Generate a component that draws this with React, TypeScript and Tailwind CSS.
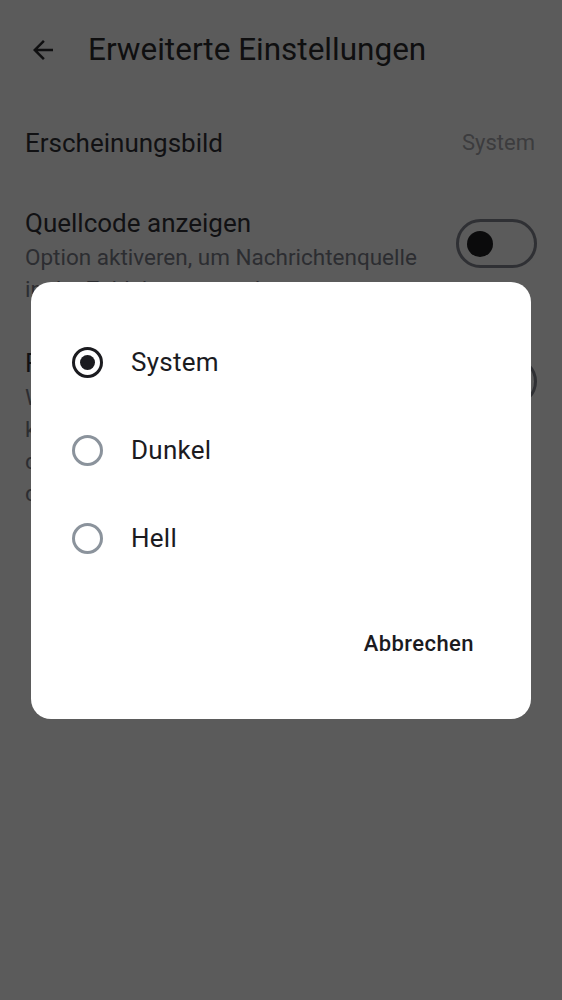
import React from "react";

function Switch() {
  return (
    <div className="w-[81px] h-[49px] shrink-0 rounded-full border-[3px] border-[#2f3034] flex items-center px-[8px]">
      <div className="w-[26px] h-[26px] rounded-full bg-[#0b0b0c]" />
    </div>
  );
}

function Radio({ selected, label }: { selected?: boolean; label: string }) {
  return (
    <div className="h-[88px] flex items-center">
      {selected ? (
        <div className="w-[31px] h-[31px] rounded-full border-[3px] border-[#1b1b1f] flex items-center justify-center">
          <div className="w-[15px] h-[15px] rounded-full bg-[#1b1b1f]" />
        </div>
      ) : (
        <div className="w-[31px] h-[31px] rounded-full border-[3px] border-[#8b939c]" />
      )}
      <span className="ml-[28px] text-[26px] leading-none text-[#1b1b1f] tracking-[0.01em] -translate-y-[1px]">{label}</span>
    </div>
  );
}

export default function App() {
  return (
    <div
      className="relative w-[562px] h-[1000px] overflow-hidden bg-[#5b5b5b]"
      style={{ fontFamily: "Roboto, 'Noto Sans', sans-serif" }}
    >
      <div className="flex items-center h-[100px] pl-[28px]">
        <svg width="30" height="30" viewBox="0 0 24 24" className="shrink-0">
          <path d="M20 11H7.83l5.59-5.59L12 4l-8 8 8 8 1.41-1.41L7.83 13H20v-2z" fill="#0f0f10" />
        </svg>
        <span className="ml-[30px] text-[31.5px] leading-none text-[#0f0f10]">Erweiterte Einstellungen</span>
      </div>

      <div className="flex items-center justify-between pl-[25px] pr-[27px] h-[86px]">
        <span className="text-[26px] leading-none text-[#111113]">Erscheinungsbild</span>
        <span className="text-[22px] leading-none text-[#3c3c3e]">System</span>
      </div>

      <div className="flex items-start justify-between pl-[25px] pr-[25px] pt-[19px]">
        <div className="flex flex-col pr-[20px]">
          <span className="text-[26px] leading-[36px] text-[#111113]">Quellcode anzeigen</span>
          <span className="text-[22.5px] leading-[32px] text-[#2c2d31]">Option aktiveren, um Nachrichtenquelle</span>
          <span className="text-[22.5px] leading-[32px] text-[#2c2d31]">in der Zeitleiste anzuzeigen</span>
        </div>
        <div className="pt-[14px]">
          <Switch />
        </div>
      </div>

      <div className="flex items-start justify-between pl-[25px] pr-[25px] pt-[40px]">
        <div className="flex flex-col pr-[20px]">
          <span className="text-[26px] leading-[36px] text-[#111113]">Farbige Benutzernamen</span>
          <span className="text-[22.5px] leading-[32px] text-[#2c2d31]">Wenn aktiviert, werden Benutzernamen</span>
          <span className="text-[22.5px] leading-[32px] text-[#2c2d31]">konsistent eingefärbt, um sie von</span>
          <span className="text-[22.5px] leading-[32px] text-[#2c2d31]">den anderen Teilnehmern zu</span>
          <span className="text-[22.5px] leading-[32px] text-[#2c2d31]">differenzieren</span>
        </div>
        <div className="pt-[12px]">
          <Switch />
        </div>
      </div>

      <div className="absolute inset-0 flex items-center justify-center px-[31px]">
        <div className="w-full h-[437px] bg-white rounded-[20px] flex flex-col pt-[37px] pl-[41px] pr-[45px]">
          <Radio selected label="System" />
          <Radio label="Dunkel" />
          <Radio label="Hell" />
          <div className="flex justify-end mt-[37px]">
            <div className="h-[48px] px-[12px] flex items-center text-[22px] font-medium text-[#1b1b1f] tracking-[0.02em]">
              Abbrechen
            </div>
          </div>
        </div>
      </div>
    </div>
  );
}
